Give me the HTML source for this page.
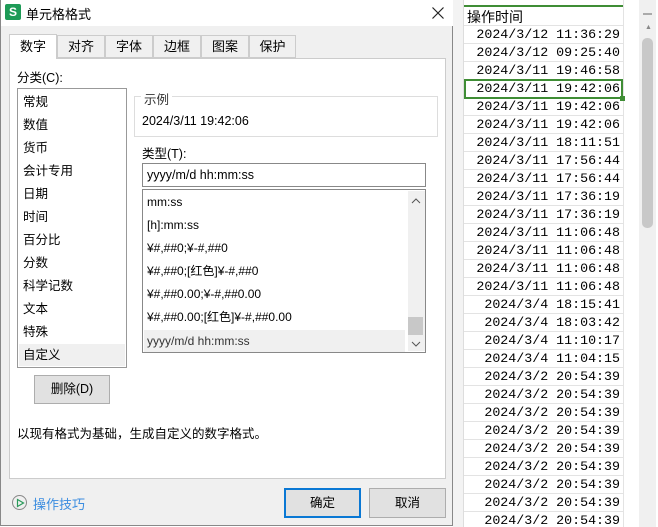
<!DOCTYPE html><html><head><meta charset="utf-8"><style>
*{margin:0;padding:0;box-sizing:border-box}
html,body{width:658px;height:527px;overflow:hidden}
body{background:#fff;position:relative;font-family:"Liberation Sans","Noto Sans CJK SC",sans-serif;font-size:12px;color:#000}
.a{position:absolute}
.cell{position:absolute;left:464px;width:159px;height:18px;border-bottom:1px solid #e3e3e3;font-family:"Liberation Mono","Noto Sans CJK SC",monospace;font-size:13.3px;text-align:right;padding-right:3px;line-height:18px}
</style></head><body>
<div class="a" style="left:453px;top:0;width:11px;height:527px;background:#f3f3f3;border-right:1px solid #ddd"></div>
<div class="a" style="left:623px;top:0;width:1px;height:527px;background:#e3e3e3"></div>
<div class="a" style="left:639px;top:0;width:17px;height:527px;background:#f0f0f0"></div>
<div class="a" style="left:643px;top:13px;width:9px;height:2px;background:#aaa"></div>
<div class="a" style="left:645px;top:24px;color:#888;font-size:7px">▲</div>
<div class="a" style="left:642px;top:38px;width:11px;height:190px;background:#c8c8c8;border-radius:5px"></div>
<div class="a" style="left:464px;top:5px;width:159px;height:2px;background:#3f8d35"></div>
<div class="cell" style="top:8px;text-align:left;padding-left:3px;font-family:'Liberation Sans','Noto Sans CJK SC',sans-serif;font-size:14px">操作时间</div>
<div id="rows"></div>
<div class="a" style="left:464px;top:79px;width:159px;height:20px;border:2px solid #3f8d35"></div>
<div class="a" style="left:620px;top:96px;width:5px;height:5px;background:#3f8d35"></div>
<script>
var d=["2024/3/12 11:36:29","2024/3/12 09:25:40","2024/3/11 19:46:58","2024/3/11 19:42:06","2024/3/11 19:42:06","2024/3/11 19:42:06","2024/3/11 18:11:51","2024/3/11 17:56:44","2024/3/11 17:56:44","2024/3/11 17:36:19","2024/3/11 17:36:19","2024/3/11 11:06:48","2024/3/11 11:06:48","2024/3/11 11:06:48","2024/3/11 11:06:48","2024/3/4 18:15:41","2024/3/4 18:03:42","2024/3/4 11:10:17","2024/3/4 11:04:15"];
while(d.length<29)d.push("2024/3/2 20:54:39");
var h="";for(var i=0;i<d.length;i++)h+='<div class="cell" style="top:'+(26+i*18)+'px">'+d[i]+'</div>';
document.getElementById("rows").innerHTML=h;
</script>
<div class="a" style="left:0;top:0;width:453px;height:526px;background:#f0f0f0;border:1px solid #888;border-top:none">
 <div class="a" style="left:0;top:0;width:452px;height:26px;background:#fff"></div>
 <div class="a" style="left:4px;top:4px;width:16px;height:16px;background:#1e9b57;border-radius:2px;color:#fff;font-weight:bold;font-size:12px;text-align:center;line-height:16px">S</div>
 <div class="a" style="left:25px;top:4px;font-size:13px">单元格格式</div>
 <svg class="a" style="left:431px;top:7px" width="12" height="12"><path d="M0.5 0.5L11.5 11.5M11.5 0.5L0.5 11.5" stroke="#222" stroke-width="1.2"/></svg>
 <div class="a" style="left:8px;top:34px;width:48px;height:25px;background:#fff;border:1px solid #ccc;border-bottom:none;z-index:2;font-size:13px;text-align:center;line-height:24px">数字</div>
 <div class="a" style="left:56px;top:35px;width:48px;height:23px;border:1px solid #ccc;font-size:13px;text-align:center;line-height:22px">对齐</div>
 <div class="a" style="left:104px;top:35px;width:48px;height:23px;border:1px solid #ccc;font-size:13px;text-align:center;line-height:22px">字体</div>
 <div class="a" style="left:152px;top:35px;width:48px;height:23px;border:1px solid #ccc;font-size:13px;text-align:center;line-height:22px">边框</div>
 <div class="a" style="left:200px;top:35px;width:48px;height:23px;border:1px solid #ccc;font-size:13px;text-align:center;line-height:22px">图案</div>
 <div class="a" style="left:248px;top:35px;width:47px;height:23px;border:1px solid #ccc;font-size:13px;text-align:center;line-height:22px">保护</div>
 <div class="a" style="left:8px;top:58px;width:437px;height:421px;background:#fff;border:1px solid #ccc">
  <div class="a" style="left:7px;top:8px;font-size:12.5px">分类(C):</div>
  <div class="a" style="left:7px;top:29px;width:110px;height:280px;border:1px solid #999;font-size:12.5px">
   <div style="padding:2px 0 0 5px;line-height:23px">常规<br>数值<br>货币<br>会计专用<br>日期<br>时间<br>百分比<br>分数<br>科学记数<br>文本<br>特殊</div>
   <div style="margin:0 1px;padding-left:4px;background:#f0f0f0;line-height:22px">自定义</div>
  </div>
  <div class="a" style="left:124px;top:37px;width:304px;height:41px;border:1px solid #ddd"></div>
  <div class="a" style="left:131px;top:30px;background:#fff;padding:0 3px;font-size:12.5px;color:#333">示例</div>
  <div class="a" style="left:132px;top:55px;font-size:12.5px">2024/3/11 19:42:06</div>
  <div class="a" style="left:132px;top:84px;font-size:12.5px">类型(T):</div>
  <div class="a" style="left:132px;top:104px;width:284px;height:24px;border:1px solid #888;padding-left:4px;line-height:22px;font-size:12.5px">yyyy/m/d hh:mm:ss</div>
  <div class="a" style="left:132px;top:130px;width:284px;height:164px;border:1px solid #888;font-size:12px">
   <div style="padding:1px 0 0 4px;line-height:23px">mm:ss<br>[h]:mm:ss<br>¥#,##0;¥-#,##0<br>¥#,##0;[红色]¥-#,##0<br>¥#,##0.00;¥-#,##0.00<br>¥#,##0.00;[红色]¥-#,##0.00</div>
   <div style="margin:1px 1px 0;padding-left:3px;width:261px;background:#f0f0f0;line-height:22px;color:#333">yyyy/m/d hh:mm:ss</div>
   <div class="a" style="left:265px;top:1px;width:17px;height:160px;background:#f0f0f0"></div>
   <svg class="a" style="left:268px;top:8px" width="10" height="6"><path d="M1 5L5 1L9 5" stroke="#555" fill="none"/></svg>
   <div class="a" style="left:265px;top:127px;width:15px;height:18px;background:#c8c8c8"></div>
   <svg class="a" style="left:268px;top:151px" width="10" height="6"><path d="M1 1L5 5L9 1" stroke="#555" fill="none"/></svg>
  </div>
  <div class="a" style="left:24px;top:316px;width:76px;height:29px;background:#e1e1e1;border:1px solid #adadad;text-align:center;line-height:27px;font-size:12.5px">删除(D)</div>
  <div class="a" style="left:7px;top:364px;font-size:12.5px">以现有格式为基础，生成自定义的数字格式。</div>
 </div>
 <div class="a" style="left:11px;top:495px;width:15px;height:15px;border:1px solid #888;border-radius:50%"></div>
 <svg class="a" style="left:15px;top:498px" width="9" height="10"><path d="M1.5 1.5L7.5 5L1.5 8.5Z" stroke="#2a9a5a" fill="none" stroke-width="1.2"/></svg>
 <div class="a" style="left:32px;top:494px;font-size:13px;color:#3b8de0">操作技巧</div>
 <div class="a" style="left:283px;top:488px;width:77px;height:30px;background:#e1e1e1;border:2px solid #0a78d4;text-align:center;line-height:26px;font-size:12.5px">确定</div>
 <div class="a" style="left:368px;top:488px;width:77px;height:30px;background:#e1e1e1;border:1px solid #adadad;text-align:center;line-height:28px;font-size:12.5px">取消</div>
</div>
</body></html>
